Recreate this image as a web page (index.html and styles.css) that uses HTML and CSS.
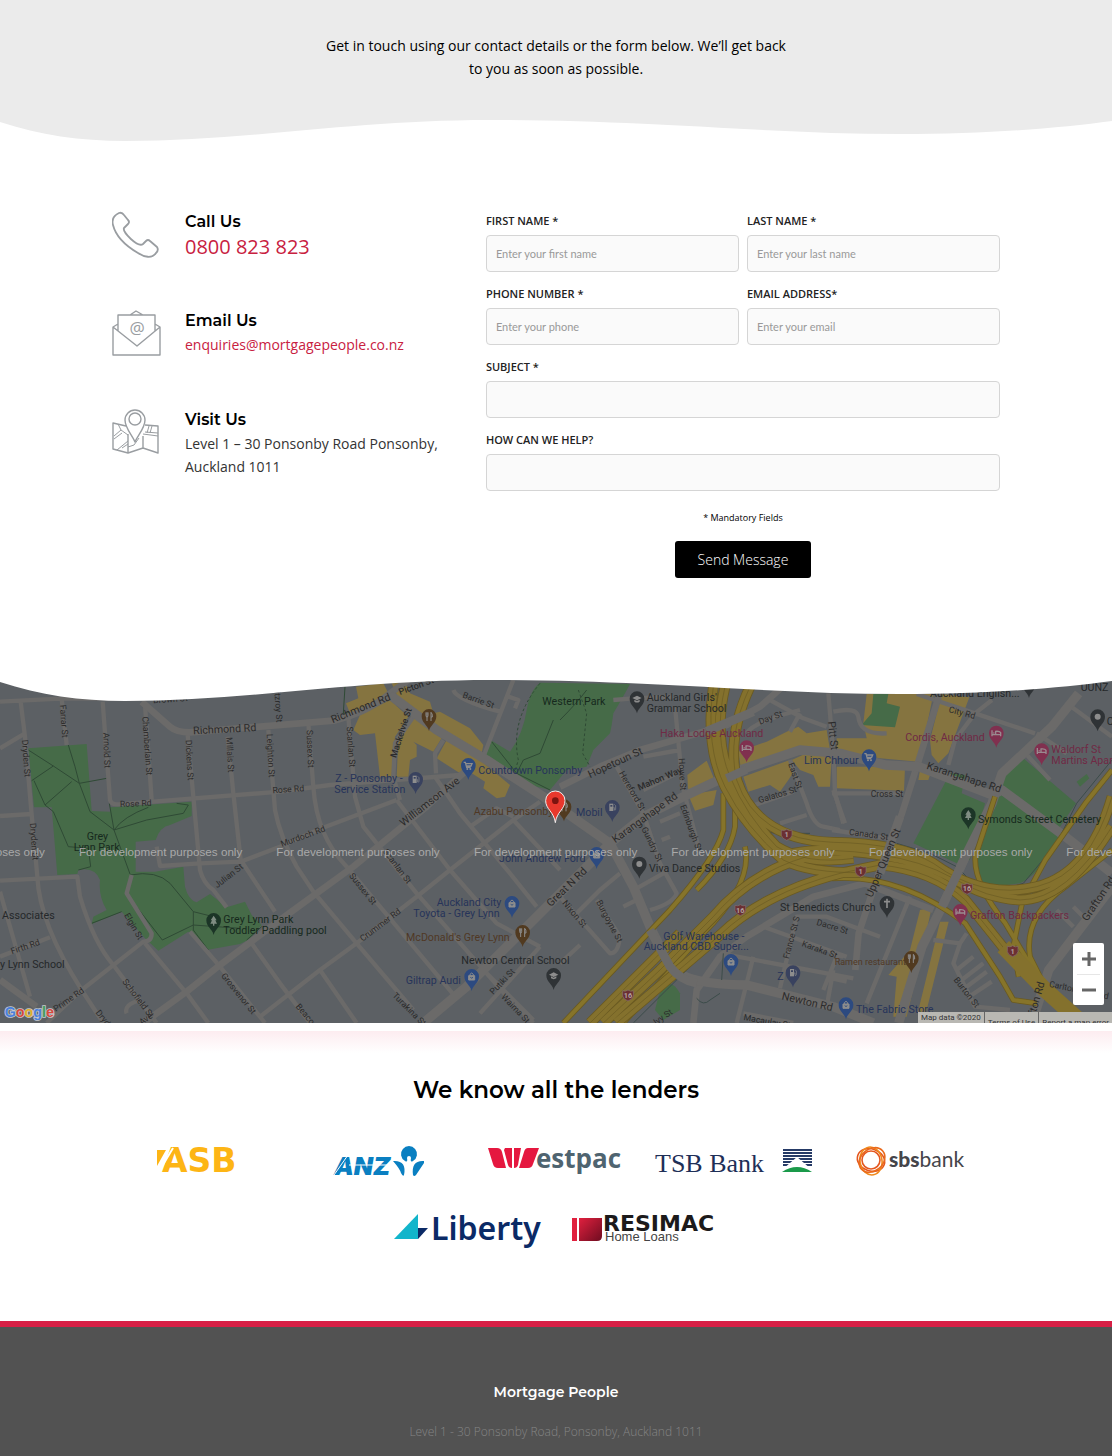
FILE: index.html
```html
<!DOCTYPE html>
<html lang="en">
<head>
<meta charset="utf-8">
<meta name="viewport" content="width=device-width, initial-scale=1">
<title>Contact | Mortgage People</title>
<link rel="stylesheet" href="styles.css">
</head>
<body>
<header class="hero">
  <p class="hero-text">Get in touch using our contact details or the form below. We’ll get back to you as soon as possible.</p>
  <svg class="wave" viewBox="0 0 1112 22" preserveAspectRatio="none" aria-hidden="true"><path d="M0 2C40 15 80 21 125 21C250 21 350 0 490 0C650 0 770 14 900 14C990 14 1060 8 1112 1V22H0Z"/></svg>
</header>

<main>
<section class="contact">
  <div class="details">
    <div class="detail">
      <svg class="detail-icon" viewBox="0 0 50 50" aria-hidden="true"><path class="ln2" d="M1 15C-1 8 3 5 7 3Q10 2 12 5L16 10Q18 12 16 14L12 18C10 22 26 38 31 34L34 31Q36 29 38 31L45 37Q47 40 44 43C40 49 32 47 26 43C14 36 4 27 1 15Z"/></svg>
      <div><h2>Call Us</h2><p class="phone"><a href="tel:0800823823">0800 823 823</a></p></div>
    </div>
    <div class="detail">
      <svg class="detail-icon" viewBox="0 0 50 50" aria-hidden="true"><path class="ln" d="M6 15L1 18V46H48V18L43 15M1 18L25 37L48 18M6 22V6H43V22M18 6L24 2L31 6"/><text class="at" x="25" y="25">@</text></svg>
      <div><h2>Email Us</h2><p><a href="mailto:enquiries@mortgagepeople.co.nz">enquiries@mortgagepeople.co.nz</a></p></div>
    </div>
    <div class="detail">
      <svg class="detail-icon" viewBox="0 0 50 50" aria-hidden="true"><path class="ln" d="M14 18L1 15V41L16 45L31 40L46 45V18L33 17M16 45V26M31 40V28M23 34C20 27 13 20 13 12A10 10 0 0 1 33 12C33 20 26 27 23 34Z"/><circle class="ln" cx="23" cy="11" r="6"/><path class="ln1" d="M6 16L9 22L2 28M9 22L16 27M2 31L10 25M5 42L16 33M10 40L16 36M31 26L46 28M33 24L46 25M37 18L35 25M40 18L38 25M27 30L22 37L16 39"/></svg>
      <div><h2>Visit Us</h2><p>Level 1 – 30 Ponsonby Road Ponsonby, Auckland 1011</p></div>
    </div>
  </div>
  <form class="form" action="#">
    <div class="field"><label for="first">FIRST NAME *</label><input id="first" type="text" placeholder="Enter your first name"></div>
    <div class="field"><label for="last">LAST NAME *</label><input id="last" type="text" placeholder="Enter your last name"></div>
    <div class="field"><label for="tel">PHONE NUMBER *</label><input id="tel" type="tel" placeholder="Enter your phone"></div>
    <div class="field"><label for="email">EMAIL ADDRESS*</label><input id="email" type="email" placeholder="Enter your email"></div>
    <div class="field wide"><label for="subject">SUBJECT *</label><input id="subject" type="text"></div>
    <div class="field wide"><label for="help">HOW CAN WE HELP?</label><input id="help" type="text"></div>
    <div class="submit wide"><p>* Mandatory Fields</p><button type="submit">Send Message</button></div>
  </form>
</section>

<section class="map" aria-label="Map">
<svg class="map-canvas" viewBox="0 30 3336 1029" preserveAspectRatio="xMidYMid slice">
  <defs>
    <path id="pin" d="M0 38C-4 20-22 14-22-6A22 22 0 0 1 22-6C22 14 4 20 0 38Z"/>
    <path id="food" d="M-9-18V-8Q-9-4-6-4V8M-3-18V-8Q-3-4-6-4M-6-18V-4M6 8V-18Q11-14 10-4H6" fill="none" stroke="#8d8d8d" stroke-width="3"/>
    <g id="bag" fill="none" stroke="#8d8d8d" stroke-width="3"><path d="M-5-8V-12Q0-20 5-12V-8"/><path fill="#8d8d8d" d="M-9-8H9V5H-9Z"/><path stroke="#33507e" d="M-4-3Q0 2 4-3"/></g>
    <g id="cart"><path d="M-14-15H-9L-5 0H7M-8-11H11L8-4H-6" fill="none" stroke="#8d8d8d" stroke-width="4"/><circle cx="-3" cy="5" r="3" fill="#8d8d8d"/><circle cx="6" cy="5" r="3" fill="#8d8d8d"/></g>
    <g id="pump"><path d="M-9-17H3V5H-9Z" fill="#8d8d8d"/><path d="M-6-13H0V-8H-6Z" fill="#39425f"/><path d="M3-5H6V2Q9 4 10 0V-11L6-15" fill="none" stroke="#8d8d8d" stroke-width="2"/></g>
    <path id="bed" d="M-13-14V4M-13-1H13V4M13-1V-7Q10-12-2-11V-3M-9-6H-6" fill="none" stroke="#9a8a90" stroke-width="4"/>
    <path id="cap" d="M-14-8L0-15L14-8L0-1ZM-8-3V3Q0 8 8 3V-3L0 1Z" fill="#8d8d8d"/>
    <path id="tree" d="M0-20L9-6H5L10 4H2V10H-2V4H-10L-5-6H-9Z" fill="#7f8c82"/>
    <path id="cross" d="M0-20V8M-9-11H9" fill="none" stroke="#8d8d8d" stroke-width="5"/>
    <circle id="dot" cy="-6" r="9" fill="#8d8d8d"/>
    <path id="shield" d="M-16-14Q-8-10 0-16Q8-10 16-14V2Q14 12 0 17Q-14 12-16 2Z" fill="#6b2f33" stroke="#84706f" stroke-width="2"/>
  </defs>
  <rect class="land" y="30" width="3336" height="1029"/>

  <g class="park">
    <path d="M85 235L260 222L275 423L330 425V412L575 395V438L510 465Q480 470 467 510L407 515V605L465 605L550 590L555 650Q565 690 590 697L630 672L680 712L735 695L755 735L785 765L745 810L720 822L620 840L565 785L475 842L435 805L365 725L275 762L280 740L320 720Q295 680 300 630Q285 590 235 600L232 612L172 615L155 412L102 412Z"/>
    <path d="M1620 38L1890 42Q1870 80 1840 130Q1835 170 1830 190L1780 240L1760 290L1700 300L1650 360L1550 335L1455 255L1475 212L1530 245Q1570 190 1580 120Q1590 60 1620 38Z"/>
    <path d="M2850 310L2895 315L2885 370L2955 400L2910 570L2870 580L2740 520Z"/>
    <path d="M3070 265L3228 400L3180 470L3170 520Q3110 620 3060 640L2945 655Q2920 610 2935 540L2990 400L3000 330Z"/>
    <path d="M3230 335L3260 312L3268 325L3240 350Z"/>
    <path d="M1975 980Q2005 910 2040 970L2040 1020L1990 1050L1965 1020Z"/>
  </g>
  <g class="trail">
    <path d="M85 240L160 288L238 340L320 325M160 288L95 332M215 335L135 405L102 332M205 225L225 290L238 340L270 425L342 480L328 400M342 480Q370 440 445 412M342 480L440 450L550 430L565 405L530 400M342 480L390 612M135 405L160 425L205 530L265 535L272 590L235 600M390 615Q470 600 510 640L580 725L640 740M390 685L487 810L580 765L720 775M580 725V780L625 840M275 760L365 725M740 810L785 770"/>
    <path d="M1475 215L1550 310L1650 360M1545 320L1570 270L1620 250L1660 150M1680 150Q1730 100 1760 60M1035 50L1030 130L1080 125"/>
    <path stroke-dasharray="8 7" d="M1620 40Q1530 150 1555 270L1540 320M1735 60L1760 130L1748 250L1770 290"/>
  </g>
  <g class="shops">
    <path d="M1068 50L1150 40L1165 70L1120 110L1050 130L1038 100L1075 85Z"/>
    <path d="M1060 180L1080 135L1170 90L1225 140L1185 200L1175 320H1140L1125 190L1080 195Z"/>
    <path d="M1190 320L1195 210L1240 140L1325 205L1300 245L1240 215L1250 225V260L1230 270L1225 320Z"/>
    <path d="M1175 40L1215 38L1230 70L1290 95L1300 130L1320 125L1410 175L1450 225L1445 250L1315 180L1195 85Z"/>
    <path d="M1340 210L1440 270L1530 345L1515 380L1490 385L1450 355L1455 335L1400 300L1380 310L1310 265Z"/>
    <path d="M2062 315L2120 272L2150 345L2065 370ZM2065 375L2150 360L2140 405L2085 422Z"/>
    <path d="M2215 245L2300 215L2360 185L2395 170L2420 190L2480 180L2490 240L2410 250L2225 310Z"/>
    <path d="M2230 320L2370 270L2385 300L2365 330L2340 365L2310 345L2245 365ZM2375 270L2420 250L2495 260L2490 350H2455L2440 315L2400 300Z"/>
    <path d="M2510 205H2600L2590 160L2600 72L2800 72L2780 170L2755 275L2640 265L2510 245ZM2510 290H2715L2712 362L2510 355Z"/>
    <path d="M2825 72L2908 82L2890 130L2860 210L2845 250L2815 280L2795 255L2790 210ZM2760 300H2795L2785 330H2755Z"/>
    <path d="M2760 720L2795 712L2770 830L2720 1040H2680L2690 920L2665 915L2730 840ZM2820 755L2846 755L2778 1028L2754 1025Z"/>
  </g>
  <path class="park" d="M2620 72L2665 72L2660 100L2700 110L2685 172L2585 165L2615 130Z"/>

  <g class="street">
    <path d="M0 95L180 86L430 86M62 95L75 200L92 400L112 620Q118 760 245 960L310 1059M0 235L75 190M0 438L95 432M185 86L200 225M0 632L232 620L240 680C270 780 300 840 340 885L470 1059M308 95L330 390Q335 405 355 403L840 365L990 345L1380 315"/>
    <path d="M435 105L455 390M563 195L580 380L600 600Q610 640 640 660L680 712M683 200L700 370L722 570L825 725M805 180L825 420Q840 500 890 590L940 665L1070 820L1240 1020M470 530L480 588L600 580L722 575L840 530L965 475L1190 390M395 615L380 670L455 790Q455 815 430 815L245 960L140 1059M570 785L660 890L795 1059M435 820L560 970L625 1059M0 665L50 840L90 980M0 860L150 802M755 820L840 940L930 1059M380 1030Q370 1005 420 990"/>
    <path d="M925 160L940 350Q950 500 1040 590L1370 985M1045 140L1065 380L1090 470L1250 670L1530 990M1190 390L1350 600L1490 760L1620 830M1305 320L1380 430L1530 610L1610 710M1240 140L1185 220L1180 320L1200 390M1330 210L1305 250L1308 310M780 1040L960 900L1070 820L1250 680L1350 600L1540 450L1620 395M960 900L1070 1059M1540 450L1680 600M1530 990L1600 1059M1440 1030L1620 830M1460 910L1600 1050M1360 60Q1370 90 1500 125M1540 30L1450 260M1525 80L1555 90L1545 115M1410 470L1490 415L1540 440"/>
    <path d="M1850 290L1930 430L1980 580L2030 670Q2020 700 1950 720M2025 110L2048 350L2095 530M1930 360L2030 310M1910 655L1990 610M1980 455L2040 430M1985 510L2010 500M1790 690L1860 800Q1855 850 1830 850L1680 680M1730 730L1800 660L1860 610M1870 710L1910 690M1680 880L1740 825M2370 270L2420 400Q2440 465 2470 470L2520 480M2250 410L2380 365M2340 460L2420 435M2240 190Q2260 155 2400 120M2310 90L2410 145L2480 170M2370 185L2400 130M2485 70L2500 250L2505 370L2530 460M1840 90L1900 85L2020 80M1930 260L2040 240"/>
    <path d="M2340 955L2390 740H2480L2640 800M2290 770L2540 860M2160 850L2560 925M2260 860L2210 1059M2230 1030L2380 1059M2500 900L2480 1010M2510 860L2470 960M2496 370L2710 370M2496 480L2660 505M2500 360L2535 460M2750 72L2925 130L3105 190M2976 90L2925 130L2865 210L2845 285M3076 250L3150 330M3110 190L3200 250M3200 100L3336 200M2730 680L2600 1000M2800 810L2880 820L2900 790M2880 820L2860 880L2925 1010L3030 1020M2870 900L2920 860M2885 930L2950 880M2900 950L2960 905M2915 975L2975 935M2500 125Q2570 110 2575 140Q2580 195 2660 190M3220 710L3250 740M3170 720L3220 770M2496 850L2530 860M2496 925L2540 935"/>
  </g>
  <g class="avenue">
    <path d="M425 95L510 170Q530 187 570 187L1000 152Q1100 130 1170 70L1225 30M430 1059L560 965L660 885L840 750L1060 590L1280 410L1400 300M0 930L110 1010M1680 350L1800 290L1920 240L2180 165L2280 110L2370 30M2080 1059L2090 960L2160 860L2240 800L2440 680L2596 640L2800 720M2816 80L2766 240L2706 430L2636 610L2576 790L2566 900"/>
    <path class="main-road" d="M1170 75L1310 180L1460 270L1630 380L1830 520L1900 650L1950 770L2010 890Q2060 945 2240 945L2500 1010L2620 1059M1270 1059L1400 950L1560 790L1830 520L1930 440L2040 385L2220 300L2400 240L2520 250L2656 285L2756 290L2976 375L3006 360L3196 500L3336 610M3236 70L3156 170L3006 310L2976 400L2896 560L2826 710L2766 830L2696 1059M3336 650L3146 900L3096 1059"/>
  </g>
  <g class="creek"><path d="M2200 340Q2250 490 2330 490L2430 490M2180 790L2090 870L1900 1059M2170 850L2165 930M2090 985Q2110 1010 2130 990L2160 970M2690 520L2790 550L2870 590L2930 650Q3020 660 3070 640L3170 520L3230 400L3336 270"/></g>
  <g class="ramp-edge">
    <path id="ramps" d="M2170 370L2170 480Q2150 560 2010 720L1690 1059M2205 380V470Q2190 560 2090 660M2235 530Q2260 640 2110 790L1870 1059M2985 380L2926 560Q2920 640 3016 760L3100 900M3336 300L3256 400L3136 570L3066 700L3040 830L3056 920M3336 540L3196 650Q3070 740 3090 860L3140 960M2496 625Q2700 610 2896 760L3000 920L3040 990L3110 1000"/>
  </g>
  <use href="#ramps" class="ramp"/>
  <g class="mway-edge">
    <path id="mways" d="M2140 50Q2115 230 2175 350T2350 570Q2430 610 2590 608M2175 50Q2140 200 2190 320T2330 530Q2420 585 2560 565M2250 50Q2180 200 2210 330Q2270 510 2500 517Q2700 520 2800 580Q2950 690 3110 650T3336 380M2380 550Q2480 530 2640 555Q2760 570 2860 625Q2960 685 3060 690Q3200 690 3336 470M1810 1059L1980 900L2140 740Q2250 610 2420 560M1770 1059L1960 870L2040 790M1850 1059L2160 795Q2290 670 2520 610L2640 585Q2800 600 2896 690L3016 840L3136 960L3256 1059"/>
  </g>
  <use href="#mways" class="mway"/>
  <use href="#mways" class="mway-line"/>
  <path class="mway-wide" d="M3010 830L3136 960L3270 1080"/>
  <g class="bridge"><path d="M2180 325L2240 298M1950 780L2010 890Q2040 930 2090 940M2700 440L2640 610M2896 560L2826 710M2120 184L2260 125"/></g>

  <g class="road-name">
    <text x="460" y="100" transform="rotate(-4 460 100)">Brown St</text>
    <text class="big" x="580" y="193" transform="rotate(-3 580 193)">Richmond Rd</text>
    <text class="big" x="998" y="160" transform="rotate(-22 998 160)">Richmond Rd</text>
    <text transform="translate(180 105) rotate(86)">Farrar St</text>
    <text transform="translate(66 210) rotate(86)">Dryden St</text>
    <text transform="translate(90 460) rotate(86)">Dryden St</text>
    <text transform="translate(310 188) rotate(88)">Arnold St</text>
    <text transform="translate(427 140) rotate(86)">Chamberlain St</text>
    <text transform="translate(557 210) rotate(87)">Dickens St</text>
    <text transform="translate(679 202) rotate(87)">Millais St</text>
    <text transform="translate(800 192) rotate(87)">Leighton St</text>
    <text transform="translate(822 50) rotate(86)">Fitzroy St</text>
    <text x="360" y="411" transform="rotate(-2 360 411)">Rose Rd</text>
    <text x="818" y="370" transform="rotate(-4 818 370)">Rose Rd</text>
    <text transform="translate(652 655) rotate(-38)">Julian St</text>
    <text transform="translate(372 736) rotate(60)">Elgin St</text>
    <text transform="translate(36 853) rotate(-19)">Firth Rd</text>
    <text transform="translate(168 1026) rotate(-35)">Prime Rd</text>
    <text transform="translate(366 935) rotate(53)">Schofield St</text>
    <text transform="translate(286 1028) rotate(52)">Dryden St</text>
    <text transform="translate(662 918) rotate(51)">Grosvenor St</text>
    <text transform="translate(425 1066) rotate(-35)">Ave</text>
    <text transform="translate(846 531) rotate(-20)">Murdoch Rd</text>
    <text transform="translate(920 180) rotate(88)">Sussex St</text>
    <text transform="translate(1040 170) rotate(86)">Scanlan St</text>
    <text class="mid" transform="translate(1188 265) rotate(-72)">Mackelvie St</text>
    <text class="mid" transform="translate(1200 75) rotate(-20)">Picton St</text>
    <text transform="translate(1386 82) rotate(20)">Barrie St</text>
    <text class="big" transform="translate(1210 470) rotate(-38)">Williamson Ave</text>
    <text transform="translate(1148 545) rotate(53)">Scanlan St</text>
    <text transform="translate(1046 618) rotate(51)">Sussex St</text>
    <text transform="translate(1088 815) rotate(-37)">Crummer Rd</text>
    <text transform="translate(1176 978) rotate(45)">Turakina St</text>
    <text transform="translate(886 1010) rotate(50)">Beaconsfield St</text>
    <text transform="translate(1480 975) rotate(-46)">Putiki St</text>
    <text transform="translate(1502 982) rotate(46)">Waima St</text>
    <text class="big" transform="translate(1652 712) rotate(-44)">Great N Rd</text>
    <text transform="translate(1686 700) rotate(50)">Nixon St</text>
    <text transform="translate(1788 696) rotate(62)">Burgoyne St</text>
    <text class="big" transform="translate(1770 325) rotate(-25)">Hopetoun St</text>
    <text transform="translate(1856 310) rotate(60)">Hereford St</text>
    <text class="mid" transform="translate(1918 362) rotate(-23)">Mahon Way</text>
    <text transform="translate(2036 265) rotate(87)">Howe St</text>
    <text transform="translate(2040 408) rotate(70)">Edinburgh St</text>
    <text transform="translate(1924 476) rotate(64)">Gundry St</text>
    <text class="big" transform="translate(1846 520) rotate(-36)">Karangahape Rd</text>
    <text transform="translate(2280 164) rotate(-20)">Day St</text>
    <text class="big" transform="translate(2484 155) rotate(84)">Pitt St</text>
    <text transform="translate(2364 282) rotate(70)">East St</text>
    <text transform="translate(2278 400) rotate(-17)">Galatos St</text>
    <text transform="translate(2366 868) rotate(-75)">France St S</text>
    <text transform="translate(2448 764) rotate(17)">Dacre St</text>
    <text transform="translate(2404 828) rotate(20)">Karaka St</text>
    <text class="big" transform="translate(2344 988) rotate(13)">Newton Rd</text>
    <text transform="translate(2230 1050) rotate(10)">Macaulay St</text>
    <text transform="translate(1968 1066) rotate(-35)">Ivy St</text>
    <text transform="translate(2845 126) rotate(15)">City Rd</text>
    <text class="big" transform="translate(2778 296) rotate(18)">Karangahape Rd</text>
    <text x="2612" y="380">Cross St</text>
    <text transform="translate(2546 494) rotate(8)">Canada St</text>
    <text class="big" transform="translate(2616 684) rotate(-67)">Upper Queen St</text>
    <text transform="translate(2860 930) rotate(52)">Burton St</text>
    <text transform="translate(3146 950) rotate(12)">Carlton Gore Rd</text>
    <text class="big" transform="translate(3262 755) rotate(-56)">Grafton Rd</text>
    <text class="big" transform="translate(3092 1085) rotate(-74)">Grafton Rd</text>
  </g>

  <g class="poi">
    <text class="c-grey" x="6" y="746">Associates</text>
    <text class="c-grey" x="0" y="893">y Lynn School</text>
    <text class="c-green" x="260" y="511">Grey</text><text class="c-green" x="221" y="543">Lynn Park</text>
    <text class="c-green" x="670" y="759">Grey Lynn Park</text><text class="c-green" x="670" y="791">Toddler Paddling pool</text>
    <text class="c-blue" x="1006" y="337">Z - Ponsonby -</text><text class="c-blue" x="1003" y="369">Service Station</text>
    <text class="c-blue" x="1435" y="311">Countdown Ponsonby</text>
    <text class="c-green" x="1627" y="104">Western Park</text>
    <text class="c-brown" x="1421" y="434">Azabu Ponsonby</text>
    <text class="c-blue" x="1728" y="437">Mobil</text>
    <text class="c-blue" x="1497" y="576">John Andrew Ford</text>
    <text class="c-blue" x="1310" y="707">Auckland City</text><text class="c-blue" x="1240" y="740">Toyota - Grey Lynn</text>
    <text class="c-brown" x="1218" y="812">McDonald's Grey Lynn</text>
    <text class="c-grey" x="1384" y="883">Newton Central School</text>
    <text class="c-blue" x="1217" y="942">Giltrap Audi</text>
    <text class="c-grey" x="1940" y="93">Auckland Girls'</text><text class="c-grey" x="1940" y="125">Grammar School</text>
    <text class="c-red" x="1980" y="200">Haka Lodge Auckland</text>
    <text class="c-blue" x="2412" y="283">Lim Chhour</text>
    <text class="c-grey" x="1947" y="605">Viva Dance Studios</text>
    <text class="c-grey" x="2340" y="723">St Benedicts Church</text>
    <text class="c-blue" x="1990" y="809">Golf Warehouse -</text><text class="c-blue" x="1931" y="841">Auckland CBD Super...</text>
    <text class="c-blue" x="2332" y="929">Z</text>
    <text class="c-brown small" x="2504" y="886">Ramen restaurant</text>
    <text class="c-blue" x="2568" y="1028">The Fabric Store</text>
    <text class="c-grey" x="2790" y="82">Auckland English...</text>
    <text class="c-grey" x="3242" y="64">UUNZ</text>
    <text class="c-grey" x="3320" y="164">C</text>
    <text class="c-red" x="2716" y="212">Cordis, Auckland</text>
    <text class="c-red" x="3154" y="250">Waldorf St</text><text class="c-red" x="3154" y="283">Martins Apartments</text>
    <text class="c-green" x="2934" y="458">Symonds Street Cemetery</text>
    <text class="c-red" x="2910" y="746">Grafton Backpackers</text>
  </g>
  <g>
    <g transform="translate(641 757)"><use href="#pin" class="f-green"/><use href="#tree"/></g>
    <g transform="translate(1287 145)"><use href="#pin" class="f-brown"/><use href="#food"/></g>
    <g transform="translate(1247 334)"><use href="#pin" class="f-slate"/><use href="#pump"/></g>
    <g transform="translate(1405 292)"><use href="#pin" class="f-blue"/><use href="#cart"/></g>
    <g transform="translate(1536 706)"><use href="#pin" class="f-blue"/><use href="#bag"/></g>
    <g transform="translate(1568 793)"><use href="#pin" class="f-brown"/><use href="#food"/></g>
    <g transform="translate(1415 925)"><use href="#pin" class="f-blue"/><use href="#bag"/></g>
    <g transform="translate(1661 922)"><use href="#pin" class="f-grey"/><use href="#cap"/></g>
    <g transform="translate(1692 416)"><use href="#pin" class="f-brown"/><use href="#food"/></g>
    <g transform="translate(1837 418)"><use href="#pin" class="f-slate"/><use href="#pump"/></g>
    <g transform="translate(1790 559)"><use href="#pin" class="f-blue"/><use href="#bag"/></g>
    <g transform="translate(1911 92)"><use href="#pin" class="f-grey"/><use href="#cap"/></g>
    <g transform="translate(1918 588)"><use href="#pin" class="f-grey"/><use href="#dot"/></g>
    <g transform="translate(2240 239)"><use href="#pin" class="f-red"/><use href="#bed"/></g>
    <g transform="translate(2193 880)"><use href="#pin" class="f-blue"/><use href="#bag"/></g>
    <g transform="translate(2379 914)"><use href="#pin" class="f-slate"/><use href="#pump"/></g>
    <g transform="translate(2607 266)"><use href="#pin" class="f-blue"/><use href="#cart"/></g>
    <g transform="translate(2661 706)"><use href="#pin" class="f-grey"/><use href="#cross"/></g>
    <g transform="translate(2734 871)"><use href="#pin" class="f-brown"/><use href="#food"/></g>
    <g transform="translate(2538 1010)"><use href="#pin" class="f-blue"/><use href="#bag"/></g>
    <g transform="translate(2989 195)"><use href="#pin" class="f-red"/><use href="#bed"/></g>
    <g transform="translate(3125 248)"><use href="#pin" class="f-red"/><use href="#bed"/></g>
    <g transform="translate(3293 146)"><use href="#pin" class="f-grey"/><use href="#dot"/></g>
    <g transform="translate(3087 46)"><use href="#pin" class="f-grey"/></g>
    <g transform="translate(2905 440)"><use href="#pin" class="f-green"/><use href="#tree"/></g>
    <g transform="translate(2881 730)"><use href="#pin" class="f-red"/><use href="#bed"/></g>
  </g>
  <g class="route">
    <use href="#shield" x="2360" y="494"/><text x="2360" y="502">1</text>
    <use href="#shield" x="2221" y="720"/><text x="2221" y="728">16</text>
    <use href="#shield" x="1884" y="976"/><text x="1884" y="984">16</text>
    <use href="#shield" x="2582" y="604"/><text x="2582" y="612">1</text>
    <use href="#shield" x="2901" y="656"/><text x="2901" y="664">16</text>
    <use href="#shield" x="3038" y="843"/><text x="3038" y="851">1</text>
  </g>
  <g class="watermark">
    <text x="-355" y="557">For development purposes only</text><text x="237" y="557">For development purposes only</text><text x="829" y="557">For development purposes only</text><text x="1422" y="557">For development purposes only</text><text x="2014" y="557">For development purposes only</text><text x="2607" y="557">For development purposes only</text><text x="3199" y="557">For development purposes only</text>
  </g>
  <path class="marker" d="M1666 458C1662 425 1637 418 1637 392A29 29 0 0 1 1695 392C1695 418 1670 425 1666 458Z"/><circle cx="1666" cy="392" r="10" fill="#7d1410"/>
  <text class="google" x="14" y="1042"><tspan fill="#4a80dc">G</tspan><tspan fill="#d8483c">o</tspan><tspan fill="#dfae2c">o</tspan><tspan fill="#4a80dc">g</tspan><tspan fill="#3f9d58">l</tspan><tspan fill="#d8483c">e</tspan></text>
</svg>
<svg class="wave map-wave" viewBox="0 0 1112 22" preserveAspectRatio="none" aria-hidden="true"><path d="M0 2C40 15 80 21 125 21C250 21 350 0 490 0C650 0 770 14 900 14C990 14 1060 8 1112 1V0H0Z"/></svg>
<div class="zoom-box"><button type="button" aria-label="Zoom in"><svg viewBox="0 0 14 14"><path d="M0 7H14M7 0V14"/></svg></button><button type="button" aria-label="Zoom out"><svg viewBox="0 0 14 14"><path d="M0 7H14"/></svg></button></div>
<div class="credits"><span>Map data ©2020</span><a href="#">Terms of Use</a><a href="#">Report a map error</a></div>
</section>

<section class="lenders">
  <h2>We know all the lenders</h2>
  <ul>
    <li><svg viewBox="0 0 160 50" role="img" aria-label="ASB"><g fill="#fdb515"><path d="M37 15H46L37 31Z"/><text class="asb" x="42" y="37">ASB</text></g><path d="M38 38L53 13" stroke="#fff" stroke-width="2"/></svg></li>
    <li><svg viewBox="0 0 160 50" role="img" aria-label="ANZ"><g fill="#0a7fc1"><text class="anz" x="36" y="40">ANZ</text><path d="M107 26A8 8 0 1 1 115 26Q112 28 113 23A2 2 0 1 0 109 23Q110 28 107 26Z"/><path d="M95 26Q109 25 106 40Q105 42 103 38Q102 34 95 26ZM126 26Q113 25 115 40Q116 42 118 40L126 28Z"/></g><path d="M36 40L50 20M51 30H91" stroke="#fff" stroke-width="1"/></svg></li>
    <li><svg viewBox="0 0 160 50" role="img" aria-label="Westpac"><g fill="#e5173f"><path d="M12 13H21Q25 13 26 17L30 33H22Q18 33 17 29Z"/><path d="M29 13H36V33Q33 33 32 30L28 15Z"/><path d="M38 13H45L42 30Q41 33 38 33Z"/><path d="M52 13H63L57 29Q56 33 52 33H43L48 17Q49 13 52 13Z"/></g><text class="westpac" x="60" y="33">estpac</text></svg></li>
    <li><svg viewBox="0 0 160 50" role="img" aria-label="TSB Bank"><text class="tsb" x="1" y="37">TSB Bank</text><path d="M129 15H158M129 18H158M129 21H158M129 24H158M129 27H158M129 30H158" stroke="#253a66" stroke-width="2"/><path fill="#fff" d="M143 22L157 34H129Z"/><path fill="#1a9a4a" d="M128 37Q143 27 158 37Z"/></svg></li>
    <li><svg viewBox="0 0 160 50" role="img" aria-label="SBS Bank"><g fill="none" stroke-width="1.6"><ellipse cx="39" cy="25" rx="14" ry="11" stroke="#e4571f" transform="rotate(20 39 25)"/><ellipse cx="39" cy="26" rx="14" ry="11" stroke="#f08a1d" transform="rotate(80 39 26)"/><ellipse cx="40" cy="25" rx="14" ry="11" stroke="#ea6a1c" transform="rotate(140 40 25)"/><circle cx="39" cy="25" r="9" stroke="#e4571f"/></g><text class="sbs" x="57" y="32"><tspan font-weight="900">sbs</tspan>bank</text></svg></li>
    <li><svg viewBox="0 0 160 50" role="img" aria-label="Liberty"><path fill="#12b5cb" d="M7 35L31 10V35Z"/><path fill="#0b2a66" d="M31 24H41L31 35Z"/><text class="liberty" x="44" y="36">Liberty</text></svg></li>
    <li><svg viewBox="0 0 160 50" role="img" aria-label="Resimac Home Loans"><defs><linearGradient id="rg" x2="1" y2="1"><stop offset="0" stop-color="#e0203e"/><stop offset="1" stop-color="#6e0c20"/></linearGradient></defs><path fill="#e0203e" d="M7 14H12V37H7Z"/><path fill="url(#rg)" d="M14 14H37V32Q37 37 32 37H14Z"/><text class="resimac" x="38" y="27">RESIMAC</text><text class="loans" x="40" y="37">Home Loans</text></svg></li>
  </ul>
</section>
</main>

<footer>
  <h2>Mortgage People</h2>
  <p>Level 1 - 30 Ponsonby Road, Ponsonby, Auckland 1011</p>
</footer>
</body>
</html>
```
FILE: styles.css
```css
* { box-sizing: border-box; }
body { margin: 0; background: #fff; color: #333; font: 14px/23px "Open Sans", sans-serif; }
h2, p, ul { margin: 0; padding: 0; }
h2 { color: #000; font-family: Montserrat, Inter, sans-serif; font-weight: 600; }
a { color: #c8213f; text-decoration: none; }

.hero { background: #ebebeb; padding-top: 34px; }
.hero-text { max-width: 470px; margin: 0 auto 40px; color: #000; text-align: center; }
.wave { display: block; width: 100%; height: 22px; fill: #fff; }

.contact { width: 80%; max-width: 888px; margin: 0 auto; padding: 68px 0 102px; display: grid; grid-template-columns: 8fr 11fr; }
.details { display: flex; flex-direction: column; gap: 49px; padding-right: 40px; }
.detail { display: flex; gap: 23px; min-height: 50px; }
.detail-icon { flex: none; width: 50px; height: 50px; }
.detail h2 { font-size: 16px; line-height: 24px; }
.phone { font-size: 20px; line-height: 25px; }
.ln, .ln1, .ln2 { fill: none; stroke: #999da1; stroke-linejoin: round; stroke-width: 1.4; }
.ln1 { stroke-width: 1; }
.ln2 { stroke-width: 1.8; }
.at { fill: #999da1; font: 17px "Open Sans", sans-serif; text-anchor: middle; }

.form { display: grid; grid-template-columns: 1fr 1fr; gap: 11px 8px; align-content: start; }
.wide { grid-column: 1 / -1; }
.field { display: flex; flex-direction: column; gap: 3px; }
.field label { color: #222; font-size: 11px; font-weight: 600; line-height: 22px; }
.field input { width: 100%; height: 37px; padding: 0 9px; border: 1px solid #d5d5d5; border-radius: 4px; background: #fafafa; font: 11px Lato, sans-serif; color: #333; }
.field input::placeholder { color: #999; opacity: 1; }
.submit { display: flex; flex-direction: column; align-items: center; gap: 14px; padding-top: 7px; }
.submit p { color: #000; font-size: 9px; line-height: 18px; }
.submit button { height: 37px; padding: 0 23px; border: 0; border-radius: 3px; background: #000; color: #fff; font: 300 14px "Open Sans", sans-serif; }

.map { position: relative; overflow: hidden; background: #5c6064; }
.map-canvas { display: block; width: 100%; min-height: 343px; }
.map-wave { position: absolute; top: 0; left: 0; }
.land { fill: #5c6064; }
.park { fill: #466b48; }
.shops { fill: #857440; }
.trail, .creek { fill: none; stroke: #2f4a35; stroke-width: 3; }
.creek { stroke: #3c4c4a; }
.street, .avenue, .ramp, .ramp-edge, .mway, .mway-edge, .mway-line, .mway-wide, .bridge { fill: none; stroke-linejoin: round; }
.street { stroke: #6b6a69; stroke-width: 13; }
.avenue { stroke: #6b6a69; stroke-width: 20; }
.avenue .main-road { stroke-width: 28; }
.bridge { stroke: #6b6a69; stroke-width: 26; }
.ramp-edge { stroke: #6a5a22; stroke-width: 17; }
.ramp { stroke: #86742a; stroke-width: 12; }
.mway-edge { stroke: #6a5a22; stroke-width: 32; }
.mway { stroke: #84712d; stroke-width: 27; }
.mway-line { stroke: #6a5a22; stroke-width: 2; }
.mway-wide { stroke: #84712d; stroke-width: 48; }
.map text { font-family: Roboto, sans-serif; }
.road-name { fill: #2b2b2b; font-size: 26px; }
.road-name .mid { font-size: 27px; font-weight: 500; }
.road-name .big { font-size: 32px; }
.poi { font-size: 32px; }
.poi .small { font-size: 27px; }
.c-grey { fill: #25282a; }
.c-green { fill: #16291d; }
.c-blue { fill: #27345a; }
.c-red { fill: #702a45; }
.c-brown { fill: #503824; }
.f-grey { fill: #2f3336; }
.f-green { fill: #1c3527; }
.f-blue { fill: #2c4a80; }
.f-slate { fill: #39425f; }
.f-red { fill: #80304f; }
.f-brown { fill: #513a20; }
.route text { fill: #b0a0a0; font-size: 22px; font-weight: 700; text-anchor: middle; }
.map .watermark text { fill: #a9a9a9; font: 35px "Liberation Sans", Arial, sans-serif; }
.marker { fill: #e8382d; stroke: #eee; stroke-width: 3; }
.map .google { font: 700 43px "Liberation Sans", Arial, sans-serif; stroke: #c4c8ce; stroke-width: 5px; paint-order: stroke; }
.zoom-box { position: absolute; right: 8px; bottom: 18px; width: 31px; padding: 0 4px; border-radius: 2px; background: #fff; }
.zoom-box button { display: grid; place-items: center; width: 100%; height: 31px; padding: 0; border: 0; background: none; }
.zoom-box button + button { border-top: 1px solid #e6e6e6; }
.zoom-box svg { width: 14px; height: 14px; stroke: #666; stroke-width: 3; }
.credits { position: absolute; right: 0; bottom: 0; display: flex; height: 11px; overflow: hidden; font: 8px/11px Roboto, sans-serif; white-space: nowrap; }
.credits > * { padding: 0 3px; background: #b9b8b3; color: #333; }
.credits a { padding-top: 5px; border-left: 1px solid #666; }

.lenders { margin-top: 8px; padding: 43px 10% 67px; background: linear-gradient(#fdecf0, #fff 22px); }
.lenders h2 { margin-bottom: 29px; font-size: 23px; line-height: 32px; text-align: center; }
.lenders ul { display: flex; flex-wrap: wrap; justify-content: center; row-gap: 19px; list-style: none; }
.lenders li { flex: 0 0 20%; display: flex; justify-content: center; }
.lenders li svg { flex: none; width: 160px; height: 50px; }
.asb { font: 700 33px "DejaVu Sans", sans-serif; }
.anz { font: italic 900 25px Inter, sans-serif; }
.westpac { fill: #4f6470; font: 700 26px "Open Sans", sans-serif; }
.tsb { fill: #1e2f57; font: 26px "Liberation Serif", serif; }
.sbs { fill: #45454a; font: 21px Lato, sans-serif; }
.liberty { fill: #0b2a66; font: 600 32px "Noto Sans", sans-serif; }
.resimac { fill: #1c1a1b; font: 700 22px "DejaVu Sans", sans-serif; }
.loans { fill: #444; font: 13px "Liberation Sans", sans-serif; }

footer { padding: 54px 10% 13px; border-top: 6px solid #d71f45; background: #525252; text-align: center; }
footer h2 { margin-bottom: 17px; color: #fff; font-size: 14px; line-height: 22px; }
footer p { color: #858585; font-size: 12px; font-weight: 300; }
```
